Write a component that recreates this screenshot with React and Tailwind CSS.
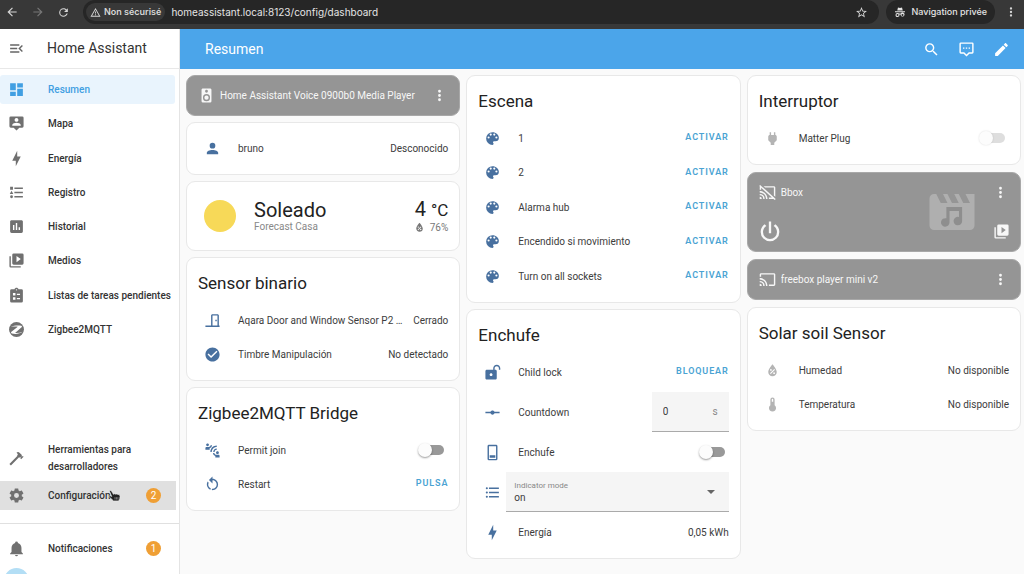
import React from "react";

const P = {
  menuOpen: "M21,15.61L19.59,17L14.58,12L19.59,7L21,8.39L17.44,12L21,15.61M3,6H16V8H3V6M3,13V11H13V13H3M3,18V16H16V18H3Z",
  dashboard: "M13,3V9H21V3M13,21H21V11H13M3,21H11V15H3M3,13H11V3H3V13Z",
  tooltipAccount:
    "M20,2H4A2,2 0 0,0 2,4V16A2,2 0 0,0 4,18H8L12,22L16,18H20A2,2 0 0,0 22,16V4A2,2 0 0,0 20,2M12,4.3C13.5,4.3 14.7,5.5 14.7,7C14.7,8.5 13.5,9.7 12,9.7C10.5,9.7 9.3,8.5 9.3,7C9.3,5.5 10.5,4.3 12,4.3M18,15H6V14.1C6,12.1 10,11 12,11C14,11 18,12.1 18,14.1V15Z",
  bolt: "M11 15H6L13 1V9H18L11 23V15Z",
  listType:
    "M5,9.5L7.5,14H2.5L5,9.5M3,4H7V8H3V4M5,20A2,2 0 0,0 7,18A2,2 0 0,0 5,16A2,2 0 0,0 3,18A2,2 0 0,0 5,20M9,5V7H21V5H9M9,19H21V17H9V19M9,13H21V11H9V13Z",
  chartBox:
    "M17,17H15V13H17V17M13,17H11V7H13V17M9,17H7V10H9V17M19,3H5C3.89,3 3,3.89 3,5V19A2,2 0 0,0 5,21H19A2,2 0 0,0 21,19V5C21,3.89 20.1,3 19,3Z",
  playBoxes:
    "M4,6H2V20A2,2 0 0,0 4,22H18V20H4V6M20,2H8A2,2 0 0,0 6,4V16A2,2 0 0,0 8,18H20A2,2 0 0,0 22,16V4A2,2 0 0,0 20,2M12,14.5V5.5L18,10L12,14.5Z",
  clipboard:
    "M19,3H14.82C14.4,1.84 13.3,1 12,1C10.7,1 9.6,1.84 9.18,3H5A2,2 0 0,0 3,5V20A2,2 0 0,0 5,22H19A2,2 0 0,0 21,20V5A2,2 0 0,0 19,3M12,3A1,1 0 0,1 13,4A1,1 0 0,1 12,5A1,1 0 0,1 11,4A1,1 0 0,1 12,3M7,8.500H10.500V12H7V8.500M12.5,9.5H17V11.2H12.5V9.5M7,14.5H10.500V18H7V14.5M12.5,15.5H17V17.2H12.5V15.5Z",
  hammer:
    "M2 19.63L13.43 8.2L12.72 7.5L14.14 6.07L12 3.89C13.2 2.7 15.09 2.7 16.27 3.89L19.87 7.5L18.45 8.91H21.29L22 9.62L18.45 13.21L17.74 12.5V9.62L16.27 11.04L15.56 10.33L4.13 21.76L2 19.63Z",
  cog: "M12,15.5A3.5,3.5 0 0,1 8.5,12A3.5,3.5 0 0,1 12,8.5A3.5,3.5 0 0,1 15.5,12A3.5,3.5 0 0,1 12,15.5M19.43,12.97C19.47,12.65 19.5,12.33 19.5,12C19.5,11.67 19.47,11.34 19.43,11L21.54,9.37C21.73,9.22 21.78,8.95 21.66,8.73L19.66,5.27C19.54,5.05 19.27,4.96 19.05,5.05L16.56,6.05C16.04,5.66 15.5,5.32 14.87,5.07L14.5,2.42C14.46,2.18 14.25,2 14,2H10C9.75,2 9.54,2.18 9.5,2.42L9.13,5.07C8.5,5.32 7.96,5.66 7.44,6.05L4.95,5.05C4.73,4.96 4.46,5.05 4.34,5.27L2.34,8.73C2.21,8.95 2.27,9.22 2.46,9.37L4.57,11C4.53,11.34 4.5,11.67 4.5,12C4.5,12.33 4.53,12.65 4.57,12.97L2.46,14.63C2.27,14.78 2.21,15.05 2.34,15.27L4.34,18.73C4.46,18.95 4.73,19.03 4.95,18.95L7.44,17.94C7.96,18.34 8.5,18.68 9.13,18.93L9.5,21.58C9.54,21.82 9.75,22 10,22H14C14.25,22 14.46,21.82 14.5,21.58L14.87,18.93C15.5,18.67 16.04,18.34 16.56,17.94L19.05,18.95C19.27,19.03 19.54,18.95 19.66,18.73L21.66,15.27C21.78,15.05 21.73,14.78 21.54,14.63L19.43,12.97Z",
  bell: "M21,19V20H3V19L5,17V11C5,7.9 7.03,5.17 10,4.29C10,4.19 10,4.1 10,4A2,2 0 0,1 12,2A2,2 0 0,1 14,4C14,4.1 14,4.19 14,4.29C16.97,5.17 19,7.9 19,11V17L21,19M14,21A2,2 0 0,1 12,23A2,2 0 0,1 10,21",
  magnify:
    "M9.5,3A6.5,6.5 0 0,1 16,9.5C16,11.11 15.41,12.59 14.44,13.73L14.71,14H15.5L20.5,19L19,20.5L14,15.5V14.71L13.73,14.44C12.59,15.41 11.11,16 9.5,16A6.5,6.5 0 0,1 3,9.5A6.5,6.5 0 0,1 9.5,3M9.5,5C7,5 5,7 5,9.5C5,12 7,14 9.5,14C12,14 14,12 14,9.5C14,7 12,5 9.5,5Z",
  comment:
    "M20,2H4A2,2 0 0,0 2,4V16A2,2 0 0,0 4,18H8L12,22L16,18H20A2,2 0 0,0 22,16V4A2,2 0 0,0 20,2M20,16H15.2L12,19.2L8.8,16H4V4H20V16M7,9H9V11H7V9M11,9H13V11H11V9M15,9H17V11H15V9Z",
  pencil:
    "M20.71,7.04C21.1,6.65 21.1,6 20.71,5.63L18.37,3.29C18,2.9 17.35,2.9 16.96,3.29L15.12,5.12L18.87,8.87M3,17.25V21H6.75L17.81,9.93L14.06,6.18L3,17.25Z",
  speaker:
    "M12,12A3,3 0 0,0 9,15A3,3 0 0,0 12,18A3,3 0 0,0 15,15A3,3 0 0,0 12,12M12,20A5,5 0 0,1 7,15A5,5 0 0,1 12,10A5,5 0 0,1 17,15A5,5 0 0,1 12,20M12,4A2,2 0 0,1 14,6A2,2 0 0,1 12,8C10.89,8 10,7.1 10,6C10,4.89 10.89,4 12,4M17,2H7C5.89,2 5,2.89 5,4V20A2,2 0 0,0 7,22H17A2,2 0 0,0 19,20V4C19,2.89 18.1,2 17,2Z",
  dots: "M12,16A2,2 0 0,1 14,18A2,2 0 0,1 12,20A2,2 0 0,1 10,18A2,2 0 0,1 12,16M12,10A2,2 0 0,1 14,12A2,2 0 0,1 12,14A2,2 0 0,1 10,12A2,2 0 0,1 12,10M12,4A2,2 0 0,1 14,6A2,2 0 0,1 12,8A2,2 0 0,1 10,6A2,2 0 0,1 12,4Z",
  account:
    "M12,4A4,4 0 0,1 16,8A4,4 0 0,1 12,12A4,4 0 0,1 8,8A4,4 0 0,1 12,4M12,14C16.42,14 20,15.79 20,18V20H4V18C4,15.79 7.58,14 12,14Z",
  waterPercent:
    "M12,3.25C12,3.25 6,10 6,14C6,17.32 8.69,20 12,20A6,6 0 0,0 18,14C18,10 12,3.25 12,3.25M14.47,9.97L15.53,11.03L9.53,17.03L8.47,15.97M9.75,10A1.25,1.25 0 0,1 11,11.25A1.25,1.25 0 0,1 9.75,12.5A1.25,1.25 0 0,1 8.5,11.25A1.25,1.25 0 0,1 9.75,10M14.25,14.5A1.25,1.25 0 0,1 15.5,15.75A1.25,1.25 0 0,1 14.25,17A1.25,1.25 0 0,1 13,15.75A1.25,1.25 0 0,1 14.25,14.5Z",
  door: "M16,11H18V13H16V11M12,3H19C20.11,3 21,3.89 21,5V19H22V21H2V19H10V5C10,3.89 10.89,3 12,3M12,5V19H19V5H12Z",
  checkCircle:
    "M12,2C6.5,2 2,6.5 2,12C2,17.5 6.5,22 12,22C17.5,22 22,17.5 22,12C22,6.5 17.5,2 12,2M10,17L5,12L6.41,10.59L10,14.17L17.59,6.58L19,8L10,17Z",
  proximity:
    "M11 14H9c0-4.97 4.03-9 9-9v2c-3.87 0-7 3.13-7 7zm7-3V9c-2.76 0-5 2.24-5 5h2c0-1.66 1.34-3 3-3zM7 4c0-1.11-.89-2-2-2s-2 .89-2 2 .89 2 2 2 2-.89 2-2zm4.45.5h-2A2.99 2.99 0 0 1 6.5 7h-3C2.67 7 2 7.67 2 8.5V11h6V8.74a4.97 4.97 0 0 0 3.45-4.24zM19 17c1.11 0 2-.89 2-2s-.89-2-2-2-2 .89-2 2 .89 2 2 2zm1.5 1h-3c-1.42 0-2.65-1-2.95-2.5h-2a4.97 4.97 0 0 0 3.45 4.24V22h6v-2.5c0-.83-.67-1.5-1.5-1.5z",
  restart:
    "M12,4C14.1,4 16.1,4.8 17.6,6.3C20.7,9.4 20.7,14.5 17.6,17.6C15.8,19.5 13.3,20.2 10.9,19.9L11.4,17.9C13.1,18.1 14.9,17.5 16.2,16.2C18.5,13.9 18.5,10.1 16.2,7.7C15.1,6.6 13.5,6 12,6V10.6L7,5.6L12,0.6V4M6.3,17.6C3.7,15 3.3,11 5.1,7.9L6.6,9.4C5.5,11.6 5.9,14.4 7.8,16.2C8.3,16.7 8.9,17.1 9.6,17.4L9,19.4C8,19 7.1,18.4 6.3,17.6Z",
  palette:
    "M17.5,12A1.5,1.5 0 0,1 16,10.5A1.5,1.5 0 0,1 17.5,9A1.5,1.5 0 0,1 19,10.5A1.5,1.5 0 0,1 17.5,12M14.5,8A1.5,1.5 0 0,1 13,6.5A1.5,1.5 0 0,1 14.5,5A1.5,1.5 0 0,1 16,6.5A1.5,1.5 0 0,1 14.5,8M9.5,8A1.5,1.5 0 0,1 8,6.5A1.5,1.5 0 0,1 9.5,5A1.5,1.5 0 0,1 11,6.5A1.5,1.5 0 0,1 9.5,8M6.5,12A1.5,1.5 0 0,1 5,10.5A1.5,1.5 0 0,1 6.5,9A1.5,1.5 0 0,1 8,10.5A1.5,1.5 0 0,1 6.5,12M12,3A9,9 0 0,0 3,12A9,9 0 0,0 12,21A1.5,1.5 0 0,0 13.5,19.5C13.5,19.11 13.35,18.76 13.11,18.5C12.88,18.23 12.73,17.88 12.73,17.5A1.5,1.5 0 0,1 14.23,16H16A5,5 0 0,0 21,11C21,6.58 16.97,3 12,3Z",
  lockOpen:
    "M18 1C15.24 1 13 3.24 13 6V8H4C2.9 8 2 8.89 2 10V20C2 21.11 2.9 22 4 22H16C17.11 22 18 21.11 18 20V10C18 8.9 17.11 8 16 8H15V6C15 4.34 16.34 3 18 3C19.66 3 21 4.34 21 6V8H23V6C23 3.24 20.76 1 18 1M10 13C11.1 13 12 13.89 12 15C12 16.11 11.11 17 10 17C8.9 17 8 16.11 8 15C8 13.9 8.9 13 10 13Z",
  rayVertex:
    "M2,11H9.17C9.58,9.83 10.69,9 12,9C13.31,9 14.42,9.83 14.83,11H22V13H14.83C14.42,14.17 13.31,15 12,15C10.69,15 9.58,14.17 9.17,13H2V11Z",
  switchOff:
    "M17,1H7A2,2 0 0,0 5,3V21A2,2 0 0,0 7,23H17A2,2 0 0,0 19,21V3A2,2 0 0,0 17,1M17,21H7V3H17V21M8,16H16V19.5H8V16Z",
  list: "M7,5H21V7H7V5M7,13V11H21V13H7M4,4.5A1.5,1.5 0 0,1 5.5,6A1.5,1.5 0 0,1 4,7.5A1.5,1.5 0 0,1 2.5,6A1.5,1.5 0 0,1 4,4.5M4,10.5A1.5,1.5 0 0,1 5.5,12A1.5,1.5 0 0,1 4,13.5A1.5,1.5 0 0,1 2.5,12A1.5,1.5 0 0,1 4,10.5M7,19V17H21V19H7M4,16.5A1.5,1.5 0 0,1 5.5,18A1.5,1.5 0 0,1 4,19.5A1.5,1.5 0 0,1 2.5,18A1.5,1.5 0 0,1 4,16.5Z",
  plug: "M16,7V3H14V7H10V3H8V7C7,7 6,8 6,9V14.5L9.5,18V21H14.5V18L18,14.5V9C18,8 17,7 16,7Z",
  castOff:
    "M1.6,1.27L0.25,2.75L1.41,3.8C1.16,4.13 1,4.55 1,5V8H3V5.23L18.2,19H14V21H20.41L22.31,22.72L23.65,21.24M6.5,3L8.7,5H21V16.14L23,17.95V5C23,3.89 22.1,3 21,3M1,10V12A9,9 0 0,1 10,21H12C12,14.92 7.08,10 1,10M1,14V16A5,5 0 0,1 6,21H8A7,7 0 0,0 1,14M1,18V21H4A3,3 0 0,0 1,18Z",
  cast: "M1,10V12A9,9 0 0,1 10,21H12C12,14.92 7.07,10 1,10M1,14V16A5,5 0 0,1 6,21H8A7,7 0 0,0 1,14M1,18V21H4A3,3 0 0,0 1,18M21,3H3C1.89,3 1,3.89 1,5V8H3V5H21V19H14V21H21A2,2 0 0,0 23,19V5C23,3.89 22.1,3 21,3Z",
  power:
    "M16.56,5.44L15.11,6.89C16.84,7.94 18,9.83 18,12A6,6 0 0,1 12,18A6,6 0 0,1 6,12C6,9.83 7.16,7.94 8.88,6.88L7.44,5.44C5.36,6.88 4,9.28 4,12A8,8 0 0,0 12,20A8,8 0 0,0 20,12C20,9.28 18.64,6.88 16.56,5.44M13,3H11V13H13",
  movie: "M18,4L20,8H17L15,4H13L15,8H12L10,4H8L10,8H7L5,4H4A2,2 0 0,0 2,6V18A2,2 0 0,0 4,20H20A2,2 0 0,0 22,18V4H18Z",
  thermometer: "M15,13V5A3,3 0 0,0 9,5V13A5,5 0 1,0 15,13M12,4A1,1 0 0,1 13,5V8H11V5A1,1 0 0,1 12,4Z",
  star: "M12,15.39L8.24,17.66L9.23,13.38L5.91,10.5L10.29,10.13L12,6.09L13.71,10.13L18.09,10.5L14.77,13.38L15.76,17.66M22,9.24L14.81,8.63L12,2L9.19,8.63L2,9.24L7.45,13.97L5.82,21L12,17.27L18.18,21L16.54,13.97L22,9.24Z",
  alert: "M12,2L1,21H23M12,6L19.53,19H4.47M11,10V14H13V10M11,16V18H13V16",
  arrowLeft: "M20,11V13H8L13.5,18.5L12.08,19.92L4.16,12L12.08,4.08L13.5,5.5L8,11H20Z",
  arrowRight: "M4,11V13H16L10.5,18.5L11.92,19.92L19.84,12L11.92,4.08L10.5,5.5L16,11H4Z",
  refresh:
    "M17.65,6.35C16.2,4.9 14.21,4 12,4A8,8 0 0,0 4,12A8,8 0 0,0 12,20C15.73,20 18.84,17.45 19.73,14H17.65C16.83,16.33 14.61,18 12,18A6,6 0 0,1 6,12A6,6 0 0,1 12,6C13.66,6 15.14,6.69 16.22,7.78L13,11H20V4L17.65,6.35Z",
  incognito:
    "M8,3L6.500,9H17.5L16,3L12,4.2L8,3M2,10.5V12.3H22V10.5H2M7,14A4,4 0 1,0 10.9,17.2C11.5,16.8 12.5,16.8 13.1,17.2A4,4 0 1,0 13.6,15.2C12.6,14.8 11.4,14.8 10.4,15.2A4,4 0 0,0 7,14M7,16A2,2 0 1,1 7,20A2,2 0 0,1 7,16M17,16A2,2 0 1,1 17,20A2,2 0 0,1 17,16Z",
};

function Icon({ name, className = "size-[17px]" }) {
  return (
    <svg viewBox="0 0 24 24" fill="currentColor" fillRule="evenodd" aria-hidden="true" className={"shrink-0 " + className}>
      <path d={P[name]} />
    </svg>
  );
}

function ZigbeeIcon() {
  return (
    <svg viewBox="0 0 24 24" aria-hidden="true" className="size-[17px] shrink-0">
      <circle cx="12" cy="12" r="10.5" fill="currentColor" />
      <path d="M3.800 8.500C8 6.300 13.500 6 18.800 6.600L20 8.200 10 16.800C14 17 17.500 16.500 20.600 15.200 16.500 18.200 10.500 18.800 5.200 17.600L4 15.800 13.800 8C10.500 7.600 7 7.700 3.800 8.500z" fill="#fff" />
    </svg>
  );
}

function BrowserBar() {
  return (
    <header className="flex h-[29px] shrink-0 items-start bg-[#383838] font-['Inter',sans-serif] text-[#d6d6d6]">
      <div className="flex h-6 w-[83px] items-center gap-3 pl-[5px]">
        <button aria-label="Précédent"><Icon name="arrowLeft" className="size-[14px]" /></button>
        <button aria-label="Suivant" className="text-[#777]"><Icon name="arrowRight" className="size-[14px]" /></button>
        <button aria-label="Actualiser"><Icon name="refresh" className="size-[13px]" /></button>
      </div>
      <div className="flex h-6 flex-1 items-center rounded-full bg-[#262626] pr-[11px] pl-[3px]">
        <button className="flex h-[18px] items-center gap-[3px] rounded-full bg-[#383838] px-[4px] text-[9px] font-semibold">
          <Icon name="alert" className="size-[11px]" />
          Non sécurisé
        </button>
        <input
          aria-label="Adresse"
          readOnly
          value="homeassistant.local:8123/config/dashboard"
          className="ml-[6px] min-w-0 flex-1 bg-transparent text-[10px] text-[#e4e4e4] outline-none"
        />
        <button aria-label="Favori"><Icon name="star" className="size-[13px]" /></button>
      </div>
      <div className="ml-[7px] flex h-6 items-center gap-[6px] rounded-full bg-[#262626] px-[8px] text-[9px] font-medium text-[#e4e4e4]">
        <Icon name="incognito" className="size-[12px]" />
        Navigation privée
      </div>
      <button aria-label="Menu" className="mr-[6px] ml-[9px] flex h-6 items-center"><Icon name="dots" className="size-[14px]" /></button>
    </header>
  );
}

const NAV = [
  ["dashboard", "Resumen"],
  ["tooltipAccount", "Mapa"],
  ["bolt", "Energía"],
  ["listType", "Registro"],
  ["chartBox", "Historial"],
  ["playBoxes", "Medios"],
  ["clipboard", "Listas de tareas pendientes"],
  ["zigbee", "Zigbee2MQTT"],
];

function Badge({ children }) {
  return (
    <span className="ml-auto flex size-[15px] items-center justify-center rounded-full bg-[#ef9f35] text-[10px] font-normal text-white">
      {children}
    </span>
  );
}

function Sidebar() {
  return (
    <aside className="flex w-[180px] shrink-0 flex-col overflow-hidden border-r border-[#e4e4e4] bg-white text-[10px] font-medium text-[#333]">
      <div className="flex h-10 shrink-0 items-center gap-[22px] border-b border-[#e8e8e8] pl-2">
        <button aria-label="Contraer menú" className="text-[#666]"><Icon name="menuOpen" /></button>
        <h1 className="text-[14px] font-normal text-[#333]">Home Assistant</h1>
      </div>
      <nav className="mt-[6px] mr-1 flex min-h-[269px] shrink-0 flex-col justify-between">
        {NAV.map(([icon, label], i) => (
          <a
            key={label}
            href={"#" + icon}
            className={
              "flex h-[29px] items-center gap-[23px] rounded-[3px] pl-2 whitespace-nowrap " +
              (i === 0 ? "bg-[#e9f4fd] text-[#419fe2]" : "")
            }
          >
            <span className={i === 0 ? "" : "text-[#707070]"}>
              {icon === "zigbee" ? <ZigbeeIcon /> : <Icon name={icon} />}
            </span>
            {label}
          </a>
        ))}
      </nav>
      <div className="flex-1" />
      <a href="#tools" className="mr-1 flex items-center gap-[23px] py-[6px] pl-2 leading-[17px]">
        <span className="text-[#707070]"><Icon name="hammer" /></span>
        <span>Herramientas para desarrolladores</span>
      </a>
      <a href="#config" className="relative mr-[3px] flex h-[29px] shrink-0 items-center gap-[23px] bg-[#e0e0e0] pr-[15px] pl-2">
        <span className="text-[#707070]"><Icon name="cog" /></span>
        Configuración
        <Badge>2</Badge>
        <svg viewBox="0 0 24 24" className="absolute top-2 left-[108px] size-[14px]" aria-hidden="true">
          <path
            d="M2.500 3.500c1-1.600 2.800-1 3.600.4l3.200 5.300 2.200-1 1.800.8 2-.6 1.600 1 2.200.2 1.600 2.600-.6 4.400-2 3.800h-8.600L6 17l-4-3.400c-1-1.500.8-2.700 2.400-1.700l2 1z"
            fill="#222"
            stroke="#eee"
            strokeWidth="1"
          />
          <path d="M12 14v4M14.500 14v4M17 14v4" stroke="#ddd" strokeWidth=".8" />
        </svg>
      </a>
      <div className="mt-[13px] border-t border-[#e0e0e0] pt-[10px]">
        <a href="#notifications" className="mr-[3px] flex h-[29px] items-center gap-[23px] pr-[15px] pl-2">
          <span className="text-[#707070]"><Icon name="bell" /></span>
          Notificaciones
          <Badge>1</Badge>
        </a>
      </div>
      <a href="#profile" aria-label="Perfil" className="mt-[5px] flex h-[6px] shrink-0 items-start overflow-hidden pl-1">
        <span className="size-[25px] shrink-0 rounded-full bg-[#b3def5]" />
      </a>
    </aside>
  );
}

function Card({ title, children, className = "" }) {
  return (
    <section className="rounded-[9px] border border-[#e8e8e8] bg-white px-[11px] pb-[9px] text-[10px] text-[#3c3c3c]">
      <h2 className="flex h-[45px] items-center pt-[6px] text-[17px] text-[#222]">{title}</h2>
      <div className={"flex flex-col " + className}>{children}</div>
    </section>
  );
}

function Row({ icon, label, children, off, htmlFor, tall }) {
  return (
    <div className={"flex items-center gap-3 " + (tall ? "h-10" : "h-[34px]")}>
      <span className={"flex w-7 shrink-0 justify-center " + (off ? "text-[#b4b4b4]" : "text-[#48709f]")}>
        <Icon name={icon} />
      </span>
      {htmlFor ? (
        <label htmlFor={htmlFor} className="min-w-0 flex-1 whitespace-nowrap">{label}</label>
      ) : (
        <span className="min-w-0 flex-1 whitespace-nowrap">{label}</span>
      )}
      {children}
    </div>
  );
}

function Action({ children }) {
  return <button className="text-[9px] font-semibold tracking-widest text-[#4aa3d3] uppercase">{children}</button>;
}

function Toggle({ id, disabled }) {
  return (
    <input
      id={id}
      type="checkbox"
      role="switch"
      disabled={disabled}
      className={
        "relative mr-[4px] h-[10px] w-6 appearance-none rounded-full before:absolute before:-top-[2px] before:-left-[2px] before:size-[14px] before:rounded-full before:bg-[#fcfcfc] before:content-[''] " +
        (disabled
          ? "bg-[#dedede] before:shadow-[0_0_2px_rgba(0,0,0,0.15)]"
          : "bg-[#999] before:shadow-[0_1px_2px_rgba(0,0,0,0.4)]")
      }
    />
  );
}

function MediaHeader({ icon, name }) {
  return (
    <div className="flex h-[39px] items-center gap-[5px] pr-[11px] pl-[11px]">
      <Icon name={icon} />
      <span className="min-w-0 flex-1 truncate">{name}</span>
      <button aria-label={"Más opciones: " + name}><Icon name="dots" /></button>
    </div>
  );
}

const mediaCard = "relative rounded-[9px] border border-[#a8a8a8] bg-[#959595] text-[10px] text-[#f7f7f7]";

export default function App() {
  return (
    <div className="flex h-screen flex-col overflow-hidden bg-[#fafafa] font-['Roboto',sans-serif]">
      <BrowserBar />
      <div className="flex min-h-0 flex-1">
        <Sidebar />
        <div className="flex min-w-0 flex-1 flex-col">
          <div className="flex h-10 shrink-0 items-center gap-[18px] bg-[#4ba5ea] pr-[14px] pl-[25px] text-white">
            <h2 className="flex-1 text-[14px]">Resumen</h2>
            <button aria-label="Buscar"><Icon name="magnify" /></button>
            <button aria-label="Asistente"><Icon name="comment" /></button>
            <button aria-label="Editar"><Icon name="pencil" /></button>
          </div>
          <main className="grid flex-1 grid-cols-3 items-start gap-[6px] overflow-hidden pt-[6px] pr-[3px] pl-[6px]">
            <div className="flex min-w-0 flex-col gap-[6px]">
              <section className={mediaCard}>
                <MediaHeader icon="speaker" name="Home Assistant Voice 0900b0 Media Player" />
              </section>
              <section className="rounded-[9px] border border-[#e8e8e8] bg-white px-[11px] pt-2 pb-[9px] text-[10px] text-[#3c3c3c]">
                <Row icon="account" label="bruno"><span>Desconocido</span></Row>
              </section>
              <section className="flex h-[70px] items-center rounded-[9px] border border-[#e8e8e8] bg-white pr-[11px] pl-[17px] text-[10px]">
                <span className="size-8 rounded-full bg-[#f7d958]" />
                <div className="ml-[18px] flex-1">
                  <div className="text-[20px] leading-[22px] text-[#222]">Soleado</div>
                  <div className="leading-[12px] text-[#888]">Forecast Casa</div>
                </div>
                <div className="flex flex-col items-end">
                  <div className="text-[20px] leading-[22px] text-[#222]">
                    4 <span className="text-[17px]">°C</span>
                  </div>
                  <div className="flex items-center gap-1 leading-[14px] text-[#777]">
                    <Icon name="waterPercent" className="size-[13px]" />
                    76%
                  </div>
                </div>
              </section>
              <Card title="Sensor binario">
                <Row icon="door" label="Aqara Door and Window Sensor P2 …"><span>Cerrado</span></Row>
                <Row icon="checkCircle" label="Timbre Manipulación"><span>No detectado</span></Row>
              </Card>
              <Card title="Zigbee2MQTT Bridge">
                <Row icon="proximity" label="Permit join" htmlFor="permit"><Toggle id="permit" /></Row>
                <Row icon="restart" label="Restart"><Action>Pulsa</Action></Row>
              </Card>
            </div>

            <div className="flex min-w-0 flex-col gap-[6px]">
              <Card title="Escena" className="min-h-[172px] justify-between">
                {["1", "2", "Alarma hub", "Encendido si movimiento", "Turn on all sockets"].map((s) => (
                  <Row key={s} icon="palette" label={s}><Action>Activar</Action></Row>
                ))}
              </Card>
              <Card title="Enchufe" className="gap-[3px]">
                <Row icon="lockOpen" label="Child lock"><Action>Bloquear</Action></Row>
                <Row icon="rayVertex" label="Countdown" htmlFor="countdown" tall>
                  <div className="flex h-10 w-[77px] items-center border-b border-[#aaa] bg-[#f5f5f5] px-[11px]">
                    <input id="countdown" type="text" inputMode="numeric" defaultValue="0" className="w-0 flex-1 bg-transparent outline-none" />
                    <span className="text-[#888]">s</span>
                  </div>
                </Row>
                <Row icon="switchOff" label="Enchufe" htmlFor="enchufe"><Toggle id="enchufe" /></Row>
                <div className="flex h-10 items-center">
                  <span className="flex w-7 shrink-0 justify-center text-[#48709f]"><Icon name="list" /></span>
                  <div className="relative flex h-10 flex-1 flex-col justify-center border-b border-[#aaa] bg-[#f5f5f5] pl-2">
                    <label htmlFor="indicator" className="text-[8px] leading-[11px] text-[#888]">Indicator mode</label>
                    <select id="indicator" className="w-full appearance-none bg-transparent leading-[13px] outline-none">
                      <option>on</option>
                    </select>
                    <svg viewBox="0 0 10 5" className="pointer-events-none absolute top-[18px] right-[14px] h-1 w-2" aria-hidden="true">
                      <path d="M0 0h10L5 5z" fill="#666" />
                    </svg>
                  </div>
                </div>
                <Row icon="bolt" label="Energía"><span>0,05 kWh</span></Row>
              </Card>
            </div>

            <div className="flex min-w-0 flex-col gap-[7px]">
              <Card title="Interruptor">
                <Row icon="plug" label="Matter Plug" htmlFor="matter" off><Toggle id="matter" disabled /></Row>
              </Card>
              <section className={mediaCard}>
                <svg viewBox="0 0 24 24" className="absolute top-[12px] right-[41px] size-[54px]" aria-hidden="true">
                  <path d={P.movie} fill="#afafaf" />
                  <path
                    d="M9.500 9.800h7v6.200a1.900 1.900 0 1 1-1.400-1.800V11.600h-4.200v5a1.900 1.900 0 1 1-1.400-1.800z"
                    fill="#8e8e8e"
                  />
                </svg>
                <MediaHeader icon="castOff" name="Bbox" />
                <div className="flex h-[39px] items-center justify-between pr-[10px] pl-2">
                  <button aria-label="Encender"><Icon name="power" className="size-[28px]" /></button>
                  <button aria-label="Explorar medios"><Icon name="playBoxes" /></button>
                </div>
              </section>
              <section className={mediaCard}>
                <MediaHeader icon="cast" name="freebox player mini v2" />
              </section>
              <Card title="Solar soil Sensor">
                <Row icon="waterPercent" label="Humedad" off><span>No disponible</span></Row>
                <Row icon="thermometer" label="Temperatura" off><span>No disponible</span></Row>
              </Card>
            </div>
          </main>
        </div>
      </div>
    </div>
  );
}
